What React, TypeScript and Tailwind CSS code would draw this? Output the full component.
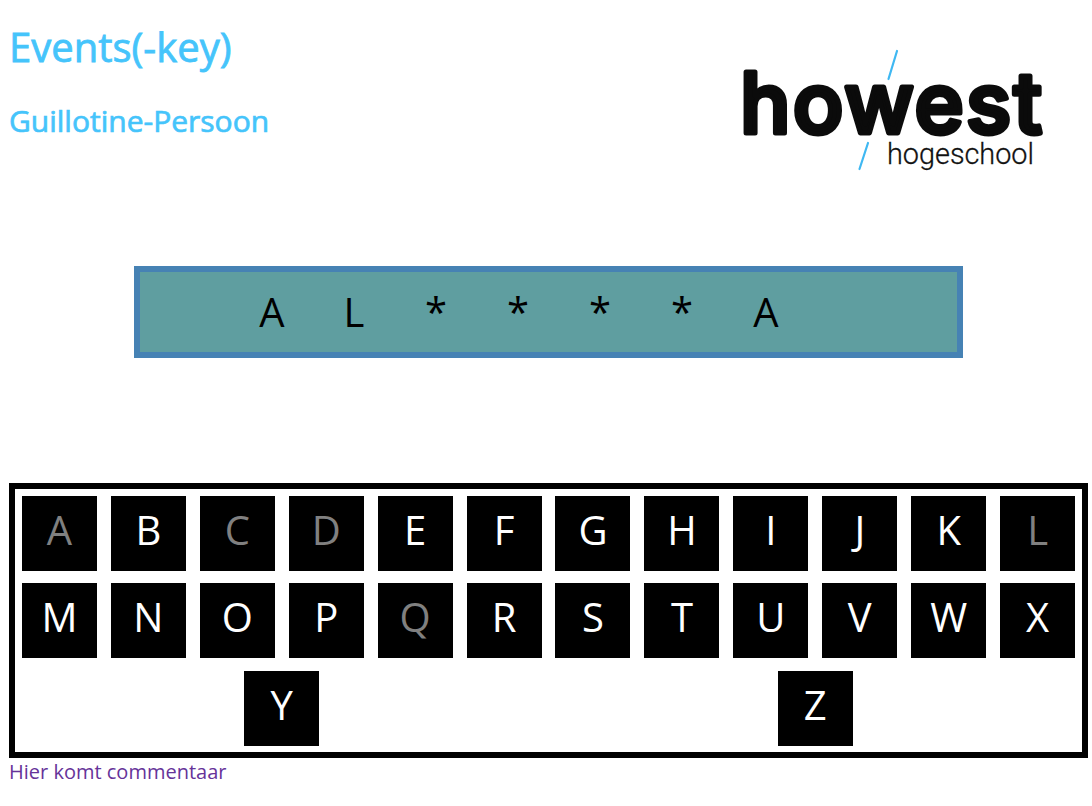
const rows = ['ABCDEFGHIJKL'.split(''), 'MNOPQRSTUVWX'.split('')];
const used = ['A', 'C', 'D', 'L', 'Q'];
const word = ['A', 'L', '*', '*', '*', '*', 'A'];

function Key({ letter }: { letter: string }) {
  return (
    <div
      className={`flex h-[75px] w-[75px] shrink-0 items-center justify-center bg-black pb-[7px] text-[40px] ${
        used.includes(letter) ? 'text-[#808080]' : 'text-white'
      }`}
    >
      {letter}
    </div>
  );
}

function Logo() {
  return (
    <svg width="340" height="150" viewBox="720 30 340 150" className="block">
      <path d="M897 51 L888.5 79" stroke="#3fb8f2" strokeWidth="2.2" strokeLinecap="round" />
      <path d="M868 143 L859.5 169" stroke="#3fb8f2" strokeWidth="2.2" strokeLinecap="round" />
      <text
        x="740"
        y="132.5"
        textLength="302"
        lengthAdjust="spacing"
        fontFamily="Inter, sans-serif"
        fontWeight="500"
        fontSize="84"
        fill="#0b0b0b"
        stroke="#0b0b0b"
        strokeWidth="5"
        strokeLinejoin="round"
      >
        howest
      </text>
      <text
        x="887"
        y="164"
        textLength="147"
        lengthAdjust="spacingAndGlyphs"
        fontFamily="Roboto, sans-serif"
        fontWeight="300"
        fontSize="30"
        fill="#111"
        stroke="#111"
        strokeWidth="0.3"
      >
        hogeschool
      </text>
    </svg>
  );
}

export default function App() {
  return (
    <div className="h-[806px] overflow-hidden bg-white pl-[9px] pr-1 font-['Open_Sans',sans-serif]">
      <header className="flex h-[180px] items-start justify-between">
        <div>
          <h1 className="mt-[18px] text-[40px] leading-[57px] text-[#45c4fb] [-webkit-text-stroke:0.8px_#45c4fb]">
            Events(-key)
          </h1>
          <h2 className="mt-[24px] text-[30px] leading-[44px] text-[#45c4fb] [-webkit-text-stroke:0.7px_#45c4fb]">
            Guillotine-Persoon
          </h2>
        </div>
        <div className="mt-[30px] mr-[28px]">
          <Logo />
        </div>
      </header>

      <div className="mx-auto mt-[86px] flex h-[92px] w-[829px] items-center border-[6px] border-[#4682b4] bg-[#5f9ea0] pl-[91px] text-[40px] text-black">
        {word.map((letter, i) => (
          <span key={i} className="w-[82px] text-center last:ml-[2px]">
            {letter}
          </span>
        ))}
      </div>

      <div className="mt-[125px] h-[275px] w-[1079.1px] border-[6px] border-black pt-[7px]">
        {rows.map((row, i) => (
          <div key={i} className={`flex justify-around ${i === 1 ? 'mt-3' : ''}`}>
            {row.map((letter) => (
              <Key key={letter} letter={letter} />
            ))}
          </div>
        ))}
        <div className="mt-[13px] flex justify-around">
          <Key letter="Y" />
          <Key letter="Z" />
        </div>
      </div>

      <p className="text-[20px] leading-[27px] text-[#663399]">Hier komt commentaar</p>
    </div>
  );
}
